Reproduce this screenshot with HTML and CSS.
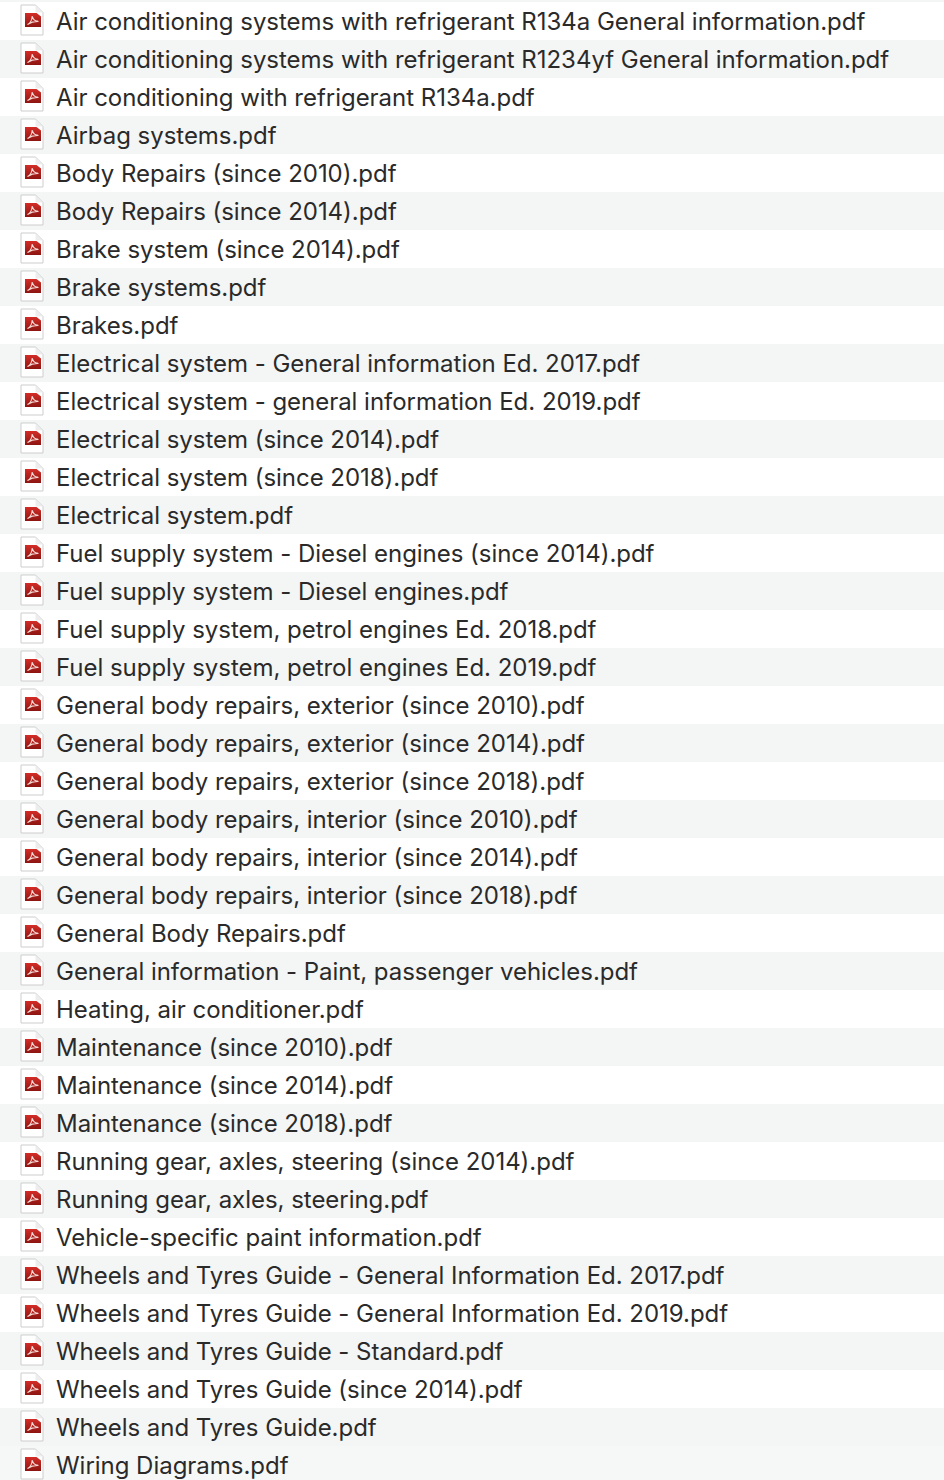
FILE: index.html
```html
<!DOCTYPE html>
<html lang="en">
<head>
    <meta charset="UTF-8">
    <title>Manuals</title>
    <link rel="stylesheet" href="styles.css">
</head>
<body>
    <svg class="defs" width="0" height="0">
        <defs>
            <linearGradient id="redFill" x1="0" y1="0" x2="0" y2="1">
                <stop offset="0" stop-color="#d42c27"/>
                <stop offset="1" stop-color="#8c1512"/>
            </linearGradient>
            <symbol id="pdf" viewBox="0 0 24 32">
                <path d="M1 1H15.500L23 8.500V31H1Z" fill="#fff" stroke="#cdcdcd"/>
                <path d="M15.500 1.500V8.500H22.500Z" fill="#ededed"/>
                <path d="M5 9H16.500L21 12.500V23H5Z" fill="url(#redFill)"/>
                <path d="M7.500 20.500C10 19.500 12 15.500 12.300 12C12.800 15.500 14.500 17.300 18.500 17.500C14.500 17.300 10.500 18.500 7.500 20.500Z" fill="none" stroke="#f4dad6" stroke-width="1.200"/>
            </symbol>
        </defs>
    </svg>

    <ul class="file-list">
        <li class="file-row"><svg class="file-icon"><use href="#pdf"/></svg><span class="file-name">Air conditioning systems with refrigerant R134a General information.pdf</span></li>
        <li class="file-row"><svg class="file-icon"><use href="#pdf"/></svg><span class="file-name">Air conditioning systems with refrigerant R1234yf General information.pdf</span></li>
        <li class="file-row"><svg class="file-icon"><use href="#pdf"/></svg><span class="file-name">Air conditioning with refrigerant R134a.pdf</span></li>
        <li class="file-row"><svg class="file-icon"><use href="#pdf"/></svg><span class="file-name">Airbag systems.pdf</span></li>
        <li class="file-row"><svg class="file-icon"><use href="#pdf"/></svg><span class="file-name">Body Repairs (since 2010).pdf</span></li>
        <li class="file-row"><svg class="file-icon"><use href="#pdf"/></svg><span class="file-name">Body Repairs (since 2014).pdf</span></li>
        <li class="file-row"><svg class="file-icon"><use href="#pdf"/></svg><span class="file-name">Brake system (since 2014).pdf</span></li>
        <li class="file-row"><svg class="file-icon"><use href="#pdf"/></svg><span class="file-name">Brake systems.pdf</span></li>
        <li class="file-row"><svg class="file-icon"><use href="#pdf"/></svg><span class="file-name">Brakes.pdf</span></li>
        <li class="file-row"><svg class="file-icon"><use href="#pdf"/></svg><span class="file-name">Electrical system - General information Ed. 2017.pdf</span></li>
        <li class="file-row"><svg class="file-icon"><use href="#pdf"/></svg><span class="file-name">Electrical system - general information Ed. 2019.pdf</span></li>
        <li class="file-row"><svg class="file-icon"><use href="#pdf"/></svg><span class="file-name">Electrical system (since 2014).pdf</span></li>
        <li class="file-row"><svg class="file-icon"><use href="#pdf"/></svg><span class="file-name">Electrical system (since 2018).pdf</span></li>
        <li class="file-row"><svg class="file-icon"><use href="#pdf"/></svg><span class="file-name">Electrical system.pdf</span></li>
        <li class="file-row"><svg class="file-icon"><use href="#pdf"/></svg><span class="file-name">Fuel supply system - Diesel engines (since 2014).pdf</span></li>
        <li class="file-row"><svg class="file-icon"><use href="#pdf"/></svg><span class="file-name">Fuel supply system - Diesel engines.pdf</span></li>
        <li class="file-row"><svg class="file-icon"><use href="#pdf"/></svg><span class="file-name">Fuel supply system, petrol engines Ed. 2018.pdf</span></li>
        <li class="file-row"><svg class="file-icon"><use href="#pdf"/></svg><span class="file-name">Fuel supply system, petrol engines Ed. 2019.pdf</span></li>
        <li class="file-row"><svg class="file-icon"><use href="#pdf"/></svg><span class="file-name">General body repairs, exterior (since 2010).pdf</span></li>
        <li class="file-row"><svg class="file-icon"><use href="#pdf"/></svg><span class="file-name">General body repairs, exterior (since 2014).pdf</span></li>
        <li class="file-row"><svg class="file-icon"><use href="#pdf"/></svg><span class="file-name">General body repairs, exterior (since 2018).pdf</span></li>
        <li class="file-row"><svg class="file-icon"><use href="#pdf"/></svg><span class="file-name">General body repairs, interior (since 2010).pdf</span></li>
        <li class="file-row"><svg class="file-icon"><use href="#pdf"/></svg><span class="file-name">General body repairs, interior (since 2014).pdf</span></li>
        <li class="file-row"><svg class="file-icon"><use href="#pdf"/></svg><span class="file-name">General body repairs, interior (since 2018).pdf</span></li>
        <li class="file-row"><svg class="file-icon"><use href="#pdf"/></svg><span class="file-name">General Body Repairs.pdf</span></li>
        <li class="file-row"><svg class="file-icon"><use href="#pdf"/></svg><span class="file-name">General information - Paint, passenger vehicles.pdf</span></li>
        <li class="file-row"><svg class="file-icon"><use href="#pdf"/></svg><span class="file-name">Heating, air conditioner.pdf</span></li>
        <li class="file-row"><svg class="file-icon"><use href="#pdf"/></svg><span class="file-name">Maintenance (since 2010).pdf</span></li>
        <li class="file-row"><svg class="file-icon"><use href="#pdf"/></svg><span class="file-name">Maintenance (since 2014).pdf</span></li>
        <li class="file-row"><svg class="file-icon"><use href="#pdf"/></svg><span class="file-name">Maintenance (since 2018).pdf</span></li>
        <li class="file-row"><svg class="file-icon"><use href="#pdf"/></svg><span class="file-name">Running gear, axles, steering (since 2014).pdf</span></li>
        <li class="file-row"><svg class="file-icon"><use href="#pdf"/></svg><span class="file-name">Running gear, axles, steering.pdf</span></li>
        <li class="file-row"><svg class="file-icon"><use href="#pdf"/></svg><span class="file-name">Vehicle-specific paint information.pdf</span></li>
        <li class="file-row"><svg class="file-icon"><use href="#pdf"/></svg><span class="file-name">Wheels and Tyres Guide - General Information Ed. 2017.pdf</span></li>
        <li class="file-row"><svg class="file-icon"><use href="#pdf"/></svg><span class="file-name">Wheels and Tyres Guide - General Information Ed. 2019.pdf</span></li>
        <li class="file-row"><svg class="file-icon"><use href="#pdf"/></svg><span class="file-name">Wheels and Tyres Guide - Standard.pdf</span></li>
        <li class="file-row"><svg class="file-icon"><use href="#pdf"/></svg><span class="file-name">Wheels and Tyres Guide (since 2014).pdf</span></li>
        <li class="file-row"><svg class="file-icon"><use href="#pdf"/></svg><span class="file-name">Wheels and Tyres Guide.pdf</span></li>
        <li class="file-row"><svg class="file-icon"><use href="#pdf"/></svg><span class="file-name">Wiring Diagrams.pdf</span></li>
    </ul>
</body>
</html>
```

FILE: styles.css
```css
html, body {
    height: 100%;
}
body {
    margin: 0;
    background-color: #fff;
    font-family: Inter, "Liberation Sans", sans-serif;
    color: #2a2a2a;
    overflow: hidden;
}
.defs {
    display: block;
    height: 0;
}
.file-list {
    list-style: none;
    margin: 0;
    padding: 2px 0 0;
    background: linear-gradient(#f4f5f5 2px, transparent 2px);
}
.file-row {
    display: flex;
    align-items: flex-start;
    gap: 12px;
    height: 38px;
    padding-left: 20px;
}
.file-row:nth-child(even) {
    background-color: #f4f5f5;
}
.file-row:last-child {
    background-color: #f6f7f7;
}
.file-icon {
    width: 24px;
    height: 32px;
    margin-top: 2px;
    flex: none;
}
.file-name {
    font-size: 24px;
    line-height: 38px;
    letter-spacing: -0.03px;
    padding-top: 1px;
    white-space: nowrap;
}
```
